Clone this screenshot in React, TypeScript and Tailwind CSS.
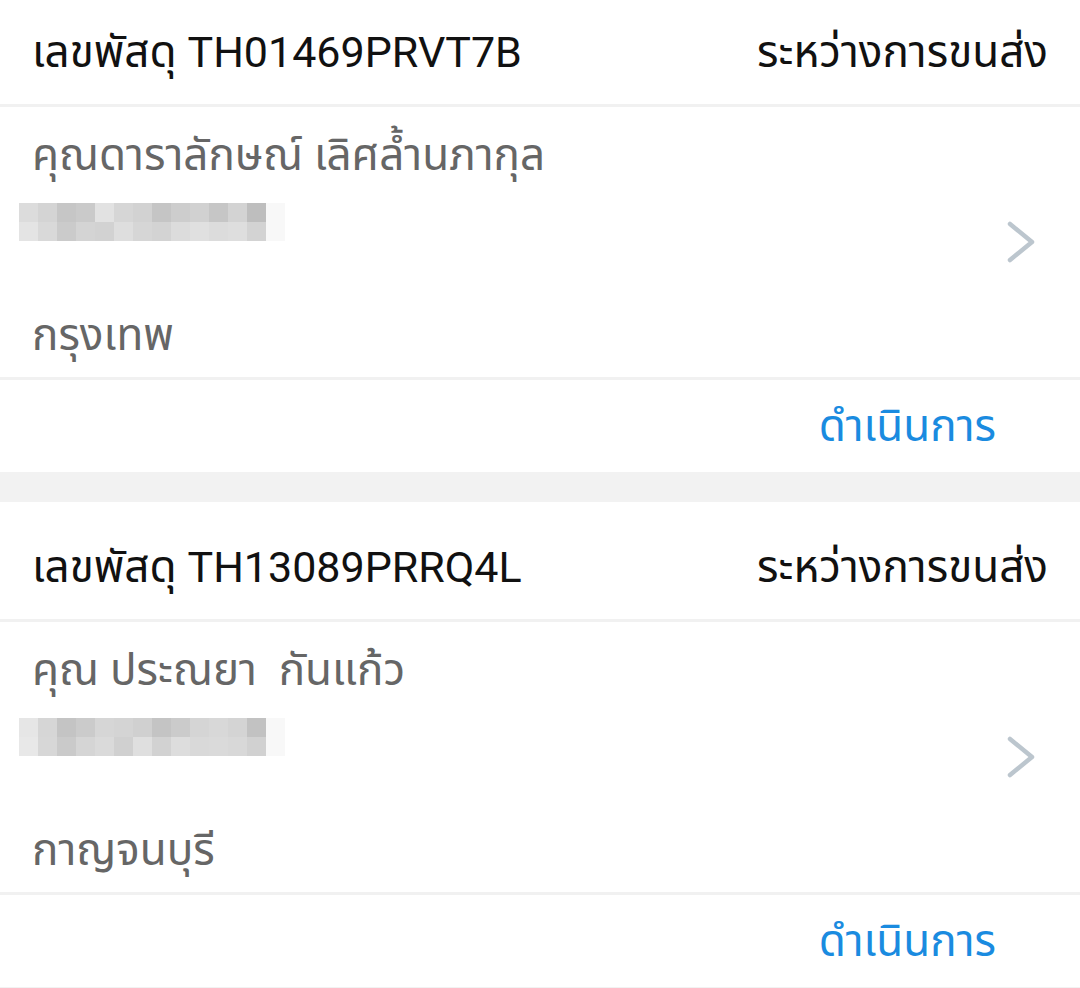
import React from "react";

type Parcel = {
  code: string;
  status: string;
  name: string;
  city: string;
  mosaic: string[][];
};

const parcels: Parcel[] = [
  {
    code: "TH01469PRVT7B",
    status: "ระหว่างการขนส่ง",
    name: "คุณดาราลักษณ์ เลิศล้ำนภากุล",
    city: "กรุงเทพ",
    mosaic: [
      ["#dcdcdc", "#d4d4d4", "#c6c6c6", "#cacaca", "#e2e2e2", "#d6d6d6", "#d2d2d2", "#c5c5c5", "#cdcdcd", "#d1d1d1", "#c6c6c6", "#d3d3d3", "#bebebe"],
      ["#e4e4e4", "#d9d9d9", "#cbcbcb", "#d4d4d4", "#d2d2d2", "#dedede", "#d6d6d6", "#d3d3d3", "#dcdcdc", "#e0e0e0", "#dcdcdc", "#dedede", "#d3d3d3"],
    ],
  },
  {
    code: "TH13089PRRQ4L",
    status: "ระหว่างการขนส่ง",
    name: "คุณ ประณยา  กันแก้ว",
    city: "กาญจนบุรี",
    mosaic: [
      ["#e6e6e6", "#d6d6d6", "#c4c4c4", "#cbcbcb", "#d6d6d6", "#d4d4d4", "#d0d0d0", "#c4c4c4", "#cbcbcb", "#d5d5d5", "#d8d8d8", "#d4d4d4", "#c2c2c2"],
      ["#e8e8e8", "#d7d7d7", "#cacaca", "#d5d5d5", "#dadada", "#d0d0d0", "#dfdfdf", "#d2d2d2", "#dddddd", "#d9d9d9", "#dadada", "#d8d8d8", "#d1d1d1"],
    ],
  },
];

function Chevron() {
  return (
    <svg width="34" height="44" viewBox="0 0 34 44" fill="none">
      <path
        d="M6 4 L28 22 L6 40"
        stroke="#bcc6ce"
        strokeWidth="4.5"
        strokeLinecap="round"
        strokeLinejoin="round"
      />
    </svg>
  );
}

function Mosaic({ rows }: { rows: string[][] }) {
  return (
    <div className="flex flex-col pl-[19px] h-[38px]">
      {rows.map((row, r) => (
        <div key={r} className="flex h-[19px]">
          {row.map((c, i) => (
            <div key={i} className="w-[19px] h-[19px]" style={{ backgroundColor: c }} />
          ))}
          <div className="w-[19px] h-[19px] bg-[#f8f8f8]" />
        </div>
      ))}
    </div>
  );
}

function ParcelCard({ parcel, first }: { parcel: Parcel; first?: boolean }) {
  return (
    <div className="bg-white flex flex-col">
      <div
        className={`flex items-center justify-between px-8 border-b-[3px] border-[#f1f1f1] ${
          first ? "h-[107px]" : "h-[120px] pt-[12px]"
        }`}
      >
        <span className="text-[44px] text-[#111]">
          เลขพัสดุ <span className="text-[43px]">{parcel.code}</span>
        </span>
        <span className="text-[44px] text-[#111]">{parcel.status}</span>
      </div>
      <div className="flex items-center justify-between border-b-[3px] border-[#f1f1f1] h-[273px] pr-[42px]">
        <div className="flex flex-col">
          <span className="px-8 pt-[6px] text-[44px] leading-[60px] text-[#666] whitespace-pre">{parcel.name}</span>
          <div className="mt-[18px]">
            <Mosaic rows={parcel.mosaic} />
          </div>
          <span className="px-8 mt-[64px] text-[44px] leading-[60px] text-[#666]">{parcel.city}</span>
        </div>
        <Chevron />
      </div>
      <div className="flex items-center justify-end h-[92px] pr-[84px]">
        <span className="text-[44px] text-[#1a8be0]">ดำเนินการ</span>
      </div>
    </div>
  );
}

export default function App() {
  return (
    <div
      className="w-[1080px] h-[988px] overflow-hidden bg-[#f2f2f2] flex flex-col gap-[30px]"
      style={{ fontFamily: 'Roboto, "Noto Sans Thai", "Noto Sans", sans-serif' }}
    >
      {parcels.map((p, i) => (
        <ParcelCard key={p.code} parcel={p} first={i === 0} />
      ))}
    </div>
  );
}
